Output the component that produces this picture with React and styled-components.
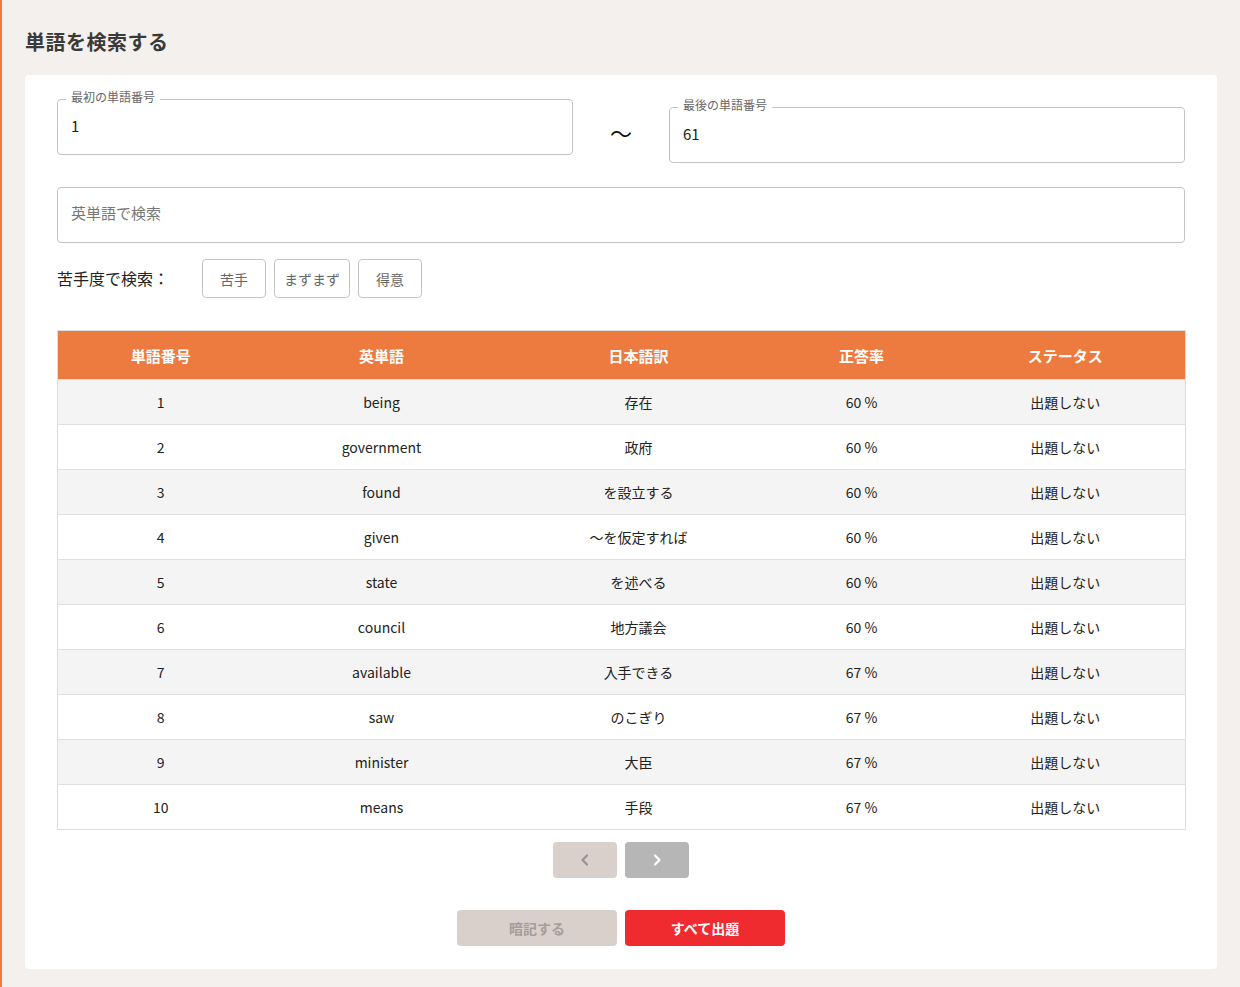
import styled, { createGlobalStyle } from 'styled-components';

const GlobalStyle = createGlobalStyle`
  html, body {
    margin: 0;
    padding: 0;
    background: #f4f0ee;
  }
  body {
    font-family: "Noto Sans CJK JP", "Noto Sans", sans-serif;
    color: #222;
  }
`

const Page = styled.div`
  min-height: 987px;
  box-sizing: border-box;
  border-left: 2px solid #ef7a3d;
  padding: 30px 23px 18px 23px;
`

const Title = styled.h1`
  margin: 0 0 21px;
  font-size: 20px;
  line-height: 24px;
  font-weight: 700;
  color: #3a3a3a;
  letter-spacing: 0.5px;
`

const Card = styled.div`
  background: #fff;
  border-radius: 4px;
  padding: 0 32px 23px;
`

const RangeRow = styled.div`
  display: flex;
  align-items: flex-start;
`

const Field = styled.div`
  position: relative;
  flex: 1;
  box-sizing: border-box;
  height: 56px;
  margin-top: ${p => p.$offset}px;
  border: 1px solid #c4c4c4;
  border-radius: 4px;
  display: flex;
  align-items: center;
  padding: 0 13px 4px;
  font-size: 15px;
  color: ${p => (p.$placeholder ? '#777' : '#222')};
`

const FieldLabel = styled.span`
  position: absolute;
  top: -11px;
  left: 8px;
  padding: 0 5px;
  background: #fff;
  font-size: 12px;
  line-height: 16px;
  color: #666;
`

const Tilde = styled.div`
  width: 96px;
  flex: none;
  text-align: center;
  font-size: 22px;
  line-height: 24px;
  margin-top: 45px;
  color: #111;
`

const SearchField = styled(Field)`
  margin-top: 24px;
  padding-bottom: 6px;
`

const LevelRow = styled.div`
  display: flex;
  align-items: center;
  margin-top: 16px;
`

const LevelLabel = styled.span`
  font-size: 16px;
  color: #222;
  width: 145px;
  padding-bottom: 2px;
`

const LevelButton = styled.button`
  height: 39px;
  min-width: 64px;
  box-sizing: border-box;
  padding: 0 9px;
  margin-right: 8px;
  border: 1px solid #c4c4c4;
  border-radius: 4px;
  background: #fff;
  font-family: inherit;
  font-size: 14px;
  color: #666;
`

const Table = styled.table`
  width: 100%;
  margin-top: 32px;
  border-collapse: collapse;
  table-layout: fixed;
  border: 1px solid #ddd;
  font-size: 14px;
`

const Th = styled.th`
  background: #ed7a3e;
  color: #fff;
  font-weight: 700;
  font-size: 15px;
  height: 48px;
  padding: 0;
  text-align: center;
`

const Tr = styled.tr`
  background: ${p => (p.$odd ? '#f4f4f4' : '#fff')};
  border-top: 1px solid #e0e0e0;
`

const Td = styled.td`
  height: 44px;
  padding: 0;
  text-align: center;
  color: #222;
`

const Pager = styled.div`
  display: flex;
  justify-content: center;
  gap: 8px;
  margin-top: 12px;
`

const PageButton = styled.button`
  width: 64px;
  height: 36px;
  border: none;
  border-radius: 4px;
  background: ${p => (p.$disabled ? '#dad0cb' : '#b6b6b6')};
  color: ${p => (p.$disabled ? '#9a9290' : '#fff')};
  display: flex;
  align-items: center;
  justify-content: center;
  padding: 0;
`

const Actions = styled.div`
  display: flex;
  justify-content: center;
  gap: 8px;
  margin-top: 32px;
`

const ActionButton = styled.button`
  width: 160px;
  height: 36px;
  border: none;
  border-radius: 4px;
  font-family: inherit;
  font-size: 14px;
  font-weight: 700;
  background: ${p => (p.$primary ? '#ef2b30' : '#dad0cb')};
  color: ${p => (p.$primary ? '#fff' : '#a59d9a')};
`

const Chevron = ({ dir }) => (
  <svg width="12" height="14" viewBox="0 0 12 14" fill="none">
    <path
      d={dir === 'left' ? 'M8 2.5 L3.5 7 L8 11.5' : 'M4 2.5 L8.5 7 L4 11.5'}
      stroke="currentColor"
      strokeWidth="2.2"
      strokeLinecap="round"
      strokeLinejoin="round"
    />
  </svg>
)

const words = [
  [1, 'being', '存在', '60 %'],
  [2, 'government', '政府', '60 %'],
  [3, 'found', 'を設立する', '60 %'],
  [4, 'given', '～を仮定すれば', '60 %'],
  [5, 'state', 'を述べる', '60 %'],
  [6, 'council', '地方議会', '60 %'],
  [7, 'available', '入手できる', '67 %'],
  [8, 'saw', 'のこぎり', '67 %'],
  [9, 'minister', '大臣', '67 %'],
  [10, 'means', '手段', '67 %'],
]

const colWidths = [206, 236, 278, 168, 240]

export default function App() {
  return (
    <Page>
      <GlobalStyle />
      <Title>単語を検索する</Title>
      <Card>
        <RangeRow>
          <Field $offset={24}>
            <FieldLabel>最初の単語番号</FieldLabel>
            1
          </Field>
          <Tilde>～</Tilde>
          <Field $offset={32}>
            <FieldLabel>最後の単語番号</FieldLabel>
            61
          </Field>
        </RangeRow>
        <SearchField $placeholder>英単語で検索</SearchField>
        <LevelRow>
          <LevelLabel>苦手度で検索：</LevelLabel>
          <LevelButton>苦手</LevelButton>
          <LevelButton>まずまず</LevelButton>
          <LevelButton>得意</LevelButton>
        </LevelRow>
        <Table>
          <colgroup>
            {colWidths.map((w, i) => (
              <col key={i} style={{ width: w }} />
            ))}
          </colgroup>
          <thead>
            <tr>
              <Th>単語番号</Th>
              <Th>英単語</Th>
              <Th>日本語訳</Th>
              <Th>正答率</Th>
              <Th>ステータス</Th>
            </tr>
          </thead>
          <tbody>
            {words.map(([no, en, ja, rate], i) => (
              <Tr key={no} $odd={i % 2 === 0}>
                <Td>{no}</Td>
                <Td>{en}</Td>
                <Td>{ja}</Td>
                <Td>{rate}</Td>
                <Td>出題しない</Td>
              </Tr>
            ))}
          </tbody>
        </Table>
        <Pager>
          <PageButton $disabled>
            <Chevron dir="left" />
          </PageButton>
          <PageButton>
            <Chevron dir="right" />
          </PageButton>
        </Pager>
        <Actions>
          <ActionButton>暗記する</ActionButton>
          <ActionButton $primary>すべて出題</ActionButton>
        </Actions>
      </Card>
    </Page>
  );
}
